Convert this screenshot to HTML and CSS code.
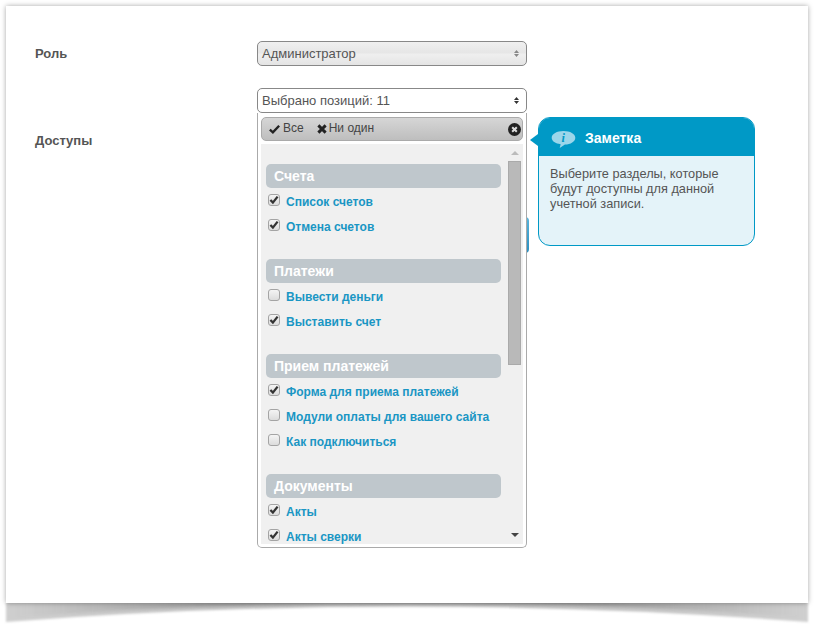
FILE: index.html
```html
<!DOCTYPE html>
<html lang="ru">
<head>
  <meta charset="UTF-8" />
  <title>Доступы</title>
  <link rel="stylesheet" href="styles.css">
</head>
<body>
  <svg class="defs" width="0" height="0">
    <symbol id="tick" viewBox="0 0 12 12">
      <path d="M2.4 6 L4.9 8.6 L9.6 2.6" fill="none" stroke="#333" stroke-width="2.3"/>
    </symbol>
    <symbol id="updown" viewBox="0 0 5 7">
      <path d="M2.5 0 L5 3 H0 Z M2.5 7 L0 4 H5 Z"/>
    </symbol>
  </svg>

  <div class="sheet">
    <div class="row">
      <div class="label">Роль</div>
      <div class="select grey">
        Администратор
        <svg class="arrows muted" width="5" height="7"><use href="#updown"/></svg>
      </div>
    </div>

    <div class="row second">
      <div class="label access">Доступы</div>
      <div class="field">
        <div class="select">
          Выбрано позиций: 11
          <svg class="arrows" width="5" height="7"><use href="#updown"/></svg>
        </div>

        <!-- popup list -->
        <div class="popup">
          <div class="toolbar">
            <svg class="tool-icon" width="11" height="10" viewBox="0 0 13 11"><path d="M1 6.2 L4.6 9.4 L12 1.6" fill="none" stroke="#222" stroke-width="2.8"/></svg>
            <span class="tool-text">Все</span>
            <svg class="tool-icon none" width="10" height="10" viewBox="0 0 11 11"><path d="M1.5 1.5 L9.5 9.5 M9.5 1.5 L1.5 9.5" fill="none" stroke="#222" stroke-width="3.2"/></svg>
            <span class="tool-text">Ни один</span>
            <svg class="tool-close" width="13" height="13" viewBox="0 0 13 13"><circle cx="6.5" cy="6.5" r="6.5" fill="#222"/><path d="M4.2 4.2 L8.8 8.8 M8.8 4.2 L4.2 8.8" stroke="#ddd" stroke-width="2"/></svg>
          </div>

          <div class="list-wrap">
            <div class="list">
              <div class="group">
                <div class="group-title">Счета</div>
                <div class="item"><span class="check"><svg width="12" height="12"><use href="#tick"/></svg></span><a>Список счетов</a></div>
                <div class="item"><span class="check"><svg width="12" height="12"><use href="#tick"/></svg></span><a>Отмена счетов</a></div>
              </div>
              <div class="group">
                <div class="group-title">Платежи</div>
                <div class="item"><span class="check"></span><a>Вывести деньги</a></div>
                <div class="item"><span class="check"><svg width="12" height="12"><use href="#tick"/></svg></span><a>Выставить счет</a></div>
              </div>
              <div class="group">
                <div class="group-title">Прием платежей</div>
                <div class="item"><span class="check"><svg width="12" height="12"><use href="#tick"/></svg></span><a>Форма для приема платежей</a></div>
                <div class="item"><span class="check"></span><a>Модули оплаты для вашего сайта</a></div>
                <div class="item"><span class="check"></span><a>Как подключиться</a></div>
              </div>
              <div class="group">
                <div class="group-title">Документы</div>
                <div class="item"><span class="check"><svg width="12" height="12"><use href="#tick"/></svg></span><a>Акты</a></div>
                <div class="item"><span class="check"><svg width="12" height="12"><use href="#tick"/></svg></span><a>Акты сверки</a></div>
              </div>
            </div>
            <div class="scrollbar">
              <div class="arrow-up"></div>
              <div class="thumb"></div>
              <div class="arrow-down"></div>
            </div>
          </div>
        </div>

        <!-- note to the right of the list -->
        <div class="note">
          <div class="note-head">
            <svg width="25" height="17" viewBox="0 0 25 18"><path d="M12.5 0 C19.5 0 25 3 25 7.2 C25 11.4 20 14.3 14 14.4 L8.5 18 L9.5 14 C4 13.4 0 10.8 0 7.2 C0 3 5.5 0 12.5 0 Z" fill="#9bd6ea"/><text x="10.5" y="12" class="note-i">i</text></svg>
            <span>Заметка</span>
          </div>
          <div class="note-body">Выберите разделы, которые будут доступны для данной учетной записи.</div>
        </div>

        <div class="save"></div>
      </div>
    </div>
  </div>

  <svg class="curl" width="806" height="26" viewBox="0 0 806 26">
    <defs>
      <linearGradient id="curlFill" x1="0" x2="1" y1="0" y2="0">
        <stop offset="0" stop-color="#cfcfcf"/>
        <stop offset="0.3" stop-color="#c4c4c4"/>
        <stop offset="0.5" stop-color="#bdbdbd"/>
        <stop offset="0.7" stop-color="#c4c4c4"/>
        <stop offset="1" stop-color="#cfcfcf"/>
      </linearGradient>
      <linearGradient id="coreFill" x1="0" x2="1" y1="0" y2="0">
        <stop offset="0" stop-color="#777" stop-opacity="0"/>
        <stop offset="0.3" stop-color="#777" stop-opacity=".55"/>
        <stop offset="0.5" stop-color="#777" stop-opacity=".8"/>
        <stop offset="0.7" stop-color="#777" stop-opacity=".55"/>
        <stop offset="1" stop-color="#777" stop-opacity="0"/>
      </linearGradient>
      <filter id="curlBlur"><feGaussianBlur stdDeviation="1.2"/></filter>
      <filter id="coreBlur"><feGaussianBlur stdDeviation="1.5"/></filter>
    </defs>
    <path d="M2 -2 H804 V19 Q403 -12 2 19 Z" fill="url(#curlFill)" filter="url(#curlBlur)"/>
    <path d="M10 -4 H796 V14 Q403 -14 10 14 Z" fill="url(#coreFill)" filter="url(#coreBlur)"/>
  </svg>
</body>
</html>
```

FILE: styles.css
```css
body {
  font-family: "Liberation Sans", Arial, sans-serif;
  margin: 0;
  background: #fff;
  color: #555;
  overflow: hidden;
}
.defs {
  position: absolute;
}
.sheet {
  position: relative;
  margin: 6px 14px 0 6px;
  height: 562px;
  padding: 35px 0 0 29px;
  background: #fff;
  box-shadow: 0 0 5px rgba(0, 0, 0, .35);
}
.curl {
  display: block;
  margin-left: 4px;
}
.row {
  display: flex;
}
.row.second {
  margin-top: 22px;
}
.label {
  width: 222px;
  font-size: 13px;
  font-weight: bold;
  line-height: 25px;
}
.label.access {
  margin-top: 40px;
}
.field {
  position: relative;
  width: 270px;
}
.select {
  position: relative;
  box-sizing: border-box;
  width: 270px;
  height: 25px;
  padding-left: 4px;
  font-size: 13px;
  line-height: 23px;
  background: #fff;
  border: 1px solid #888;
  border-radius: 5px;
}
.select.grey {
  background: linear-gradient(#f0f0f0, #e6e6e6 45%, #efefef 55%, #e4e4e4);
}
.arrows {
  position: absolute;
  top: 8px;
  right: 7px;
  fill: #333;
}
.arrows.muted {
  fill: #888;
}
.popup {
  position: absolute;
  top: 25px;
  left: 0;
  z-index: 2;
  box-sizing: border-box;
  width: 270px;
  height: 435px;
  padding: 4px 3px 3px;
  background: #fff;
  border: 1px solid #aaa;
  border-top: 0;
  border-radius: 0 0 5px 5px;
}
.toolbar {
  display: flex;
  align-items: center;
  box-sizing: border-box;
  height: 24px;
  padding: 0 1px 0 7px;
  font-size: 12px;
  color: #444;
  background: linear-gradient(#d6d6d6, #bebebe);
  border: 1px solid #aaa;
  border-radius: 5px;
}
.tool-icon {
  margin-right: 3px;
}
.tool-icon.none {
  margin-left: 13px;
  margin-right: 2px;
}
.tool-text {
  margin-top: -3px;
}
.tool-close {
  margin-left: auto;
}
.list-wrap {
  display: flex;
  height: 400px;
  margin-top: 3px;
  overflow: hidden;
  background: #f0f0f0;
}
.list {
  flex: 1;
  padding: 20px 7px 0 5px;
}
.group {
  margin-bottom: 20px;
}
.group-title {
  height: 24px;
  padding-left: 8px;
  font-size: 14px;
  font-weight: bold;
  line-height: 24px;
  color: #fff;
  background: #bfc7cc;
  border-radius: 5px;
}
.item {
  display: flex;
  align-items: center;
  height: 25px;
  font-size: 12px;
  font-weight: bold;
  color: #1a96c4;
}
.item:nth-child(2) {
  margin-top: 1px;
}
.check {
  box-sizing: border-box;
  width: 12px;
  height: 12px;
  margin: -3px 6px 0 2px;
  background: linear-gradient(#f4f4f4, #dcdcdc);
  border: 1px solid #a4a4a4;
  border-radius: 3px;
}
.check svg {
  display: block;
  margin: -1px;
}
.scrollbar {
  position: relative;
  flex: none;
  width: 13px;
  margin-right: 2px;
}
.thumb {
  position: absolute;
  top: 17px;
  left: 0;
  width: 13px;
  height: 204px;
  background: #b9b9b9;
  border: 1px solid #aaa;
  box-sizing: border-box;
}
.arrow-up,
.arrow-down {
  position: absolute;
  left: 3px;
  width: 0;
  height: 0;
  border-left: 4px solid transparent;
  border-right: 4px solid transparent;
}
.arrow-up {
  top: 7px;
  border-bottom: 4px solid #bbb;
}
.arrow-down {
  top: 389px;
  border-top: 4px solid #444;
}
.note {
  position: absolute;
  top: 29px;
  left: 281px;
  z-index: 3;
  box-sizing: border-box;
  width: 217px;
  height: 129px;
  background: #e4f3f9;
  border: 1px solid #0099c6;
  border-radius: 12px;
}
.note::before {
  content: "";
  position: absolute;
  top: 16px;
  left: -9px;
  border-top: 6px solid transparent;
  border-bottom: 6px solid transparent;
  border-right: 8px solid #0099c6;
}
.note-head {
  display: flex;
  align-items: center;
  box-sizing: border-box;
  height: 38px;
  padding: 2px 0 0 12px;
  font-size: 14px;
  font-weight: bold;
  color: #fff;
  background: #0099c6;
  border-radius: 11px 11px 0 0;
}
.note-head svg {
  margin-top: 3px;
}
.note-head span {
  margin-left: 9px;
}
.note-i {
  font-family: "Liberation Serif", serif;
  font-size: 13px;
  font-weight: bold;
  font-style: italic;
  fill: #0099c6;
}
.note-body {
  padding: 10px 20px 0 11px;
  font-size: 12.75px;
  line-height: 15px;
  color: #555;
}
.save {
  width: 272px;
  height: 36px;
  margin-top: 104px;
  background: linear-gradient(#5ab5dc, #2c8fc0);
  border-radius: 4px;
}
```
